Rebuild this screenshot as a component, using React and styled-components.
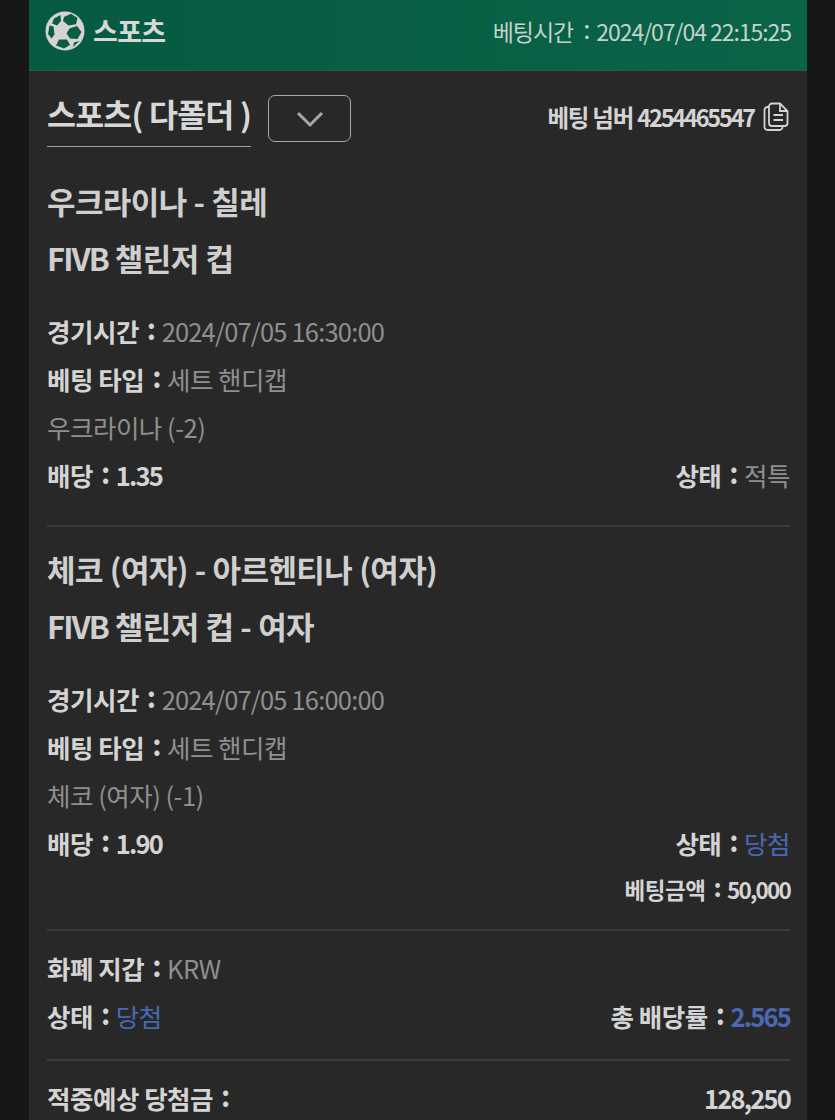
import styled, { createGlobalStyle } from 'styled-components'

const GlobalStyle = createGlobalStyle`
  html, body {
    margin: 0;
    background: #171717;
  }
  body {
    font-family: 'Noto Sans CJK KR', 'Noto Sans', sans-serif;
  }
`

const SoccerBall = () => (
  <svg width="40" height="40" viewBox="0 0 40 40">
    <circle cx="20" cy="20" r="19.500" fill="#d4d4d4" />
    <g fill="#0a5c42">
      <path d="M19 6l7-3.200 6.500 4.200-1.500 6.200-7.500 1.300L18 10z" />
      <path d="M9 7.500L15.500 4l.5 6-4 4.500-5-2z" />
      <path d="M24.500 17.500l7.500-2.500 4.500 6-4 7-7.500-.5-3.500-5z" />
      <path d="M14 28.500h8l3 5.500-6 3.500-8-3z" />
      <path d="M4.500 14.500l4 1 1 8-3 4-3.500-4.500z" />
      <path d="M34.500 30l-5.500 1.500-1 4.500z" />
    </g>
  </svg>
)

const CopyIcon = () => (
  <svg width="26" height="30" viewBox="0 0 26 30" fill="none" stroke="#d4d4d4" strokeWidth="1.800">
    <path d="M6 5H4.500A3 3 0 0 0 1.500 8v17a3 3 0 0 0 3 3h12a3 3 0 0 0 3-3v-1" />
    <path d="M6 4.500A3 3 0 0 1 9 1.500h8l7.500 7.500v12a3 3 0 0 1-3 3H9a3 3 0 0 1-3-3z" />
    <path d="M17 1.500V9h7.500M10.500 13h9.500M10.500 18h9.500" />
  </svg>
)

const Chevron = () => (
  <svg width="28" height="18" viewBox="0 0 28 18" fill="none" stroke="#a8a8a8" strokeWidth="3">
    <path d="M2 3l12 12L26 3" />
  </svg>
)

const Panel = styled.div`
  width: 778px;
  height: 1120px;
  margin-left: 29px;
  background: #282828;
  overflow: hidden;
`

const Header = styled.header`
  height: 71px;
  box-sizing: border-box;
  padding: 0 16px 9px;
  display: flex;
  align-items: center;
  justify-content: space-between;
  background: linear-gradient(90deg, #055a41, #0a6448);
  border-bottom: 1px solid #2d5a4c;
`

const Brand = styled.div`
  display: flex;
  align-items: center;
  gap: 8px;
  font-size: 27px;
  font-weight: 700;
  color: #d8d8d8;
  letter-spacing: -0.7px;
`

const BetTime = styled.div`
  font-size: 23px;
  color: #c4d2cc;
  letter-spacing: -1.050px;
`

const Content = styled.main`
  padding: 0 17px 0 18px;
`

const TopRow = styled.div`
  height: 103px;
  display: flex;
  align-items: flex-start;
  justify-content: space-between;
`

const TopLeft = styled.div`
  display: flex;
  align-items: flex-start;
  gap: 17px;
  padding-top: 24px;
`

const Category = styled.h2`
  margin: 0;
  height: 52px;
  line-height: 36px;
  box-sizing: border-box;
  border-bottom: 1px solid #a0a0a0;
  font-size: 31.500px;
  font-weight: 700;
  color: #d8d8d8;
  letter-spacing: -0.8px;
`

const ToggleButton = styled.button`
  width: 83px;
  height: 47px;
  padding: 0;
  background: transparent;
  border: 1px solid #a8a8a8;
  border-radius: 7px;
  display: flex;
  align-items: center;
  justify-content: center;
`

const BetNumber = styled.div`
  display: flex;
  align-items: center;
  gap: 9px;
  padding: 29px 1px 0 0;
  font-size: 23.500px;
  font-weight: 700;
  color: #d4d4d4;
  letter-spacing: -1.200px;
`

const Title = styled.h3`
  margin: 0;
  height: 57px;
  line-height: 54px;
  font-size: 31px;
  font-weight: 700;
  color: #cfcfcf;
  letter-spacing: -0.6px;
  word-spacing: 0.5px;
`

const Rows = styled.div`
  margin-top: 19px;
`

const Row = styled.div`
  height: 48px;
  box-sizing: border-box;
  padding-bottom: 2px;
  display: flex;
  align-items: center;
  justify-content: space-between;
  font-size: 25.500px;
  letter-spacing: -0.5px;
`

const SmallRow = styled(Row)`
  justify-content: flex-end;
  height: 46px;
  font-size: 22.500px;
`

const Label = styled.span`
  font-weight: 700;
  color: #d4d4d4;
`

const Colon = styled.span`
  display: inline-block;
  margin: 0 6px 0 8px;
  font-size: 1.120em;
  line-height: 1;
  font-weight: 700;
  color: #d4d4d4;
  transform: translateY(-2px);
`

const HeaderColon = styled(Colon)`
  margin: 0 7px 0 10px;
  font-weight: 400;
  color: #c4d2cc;
`

const Value = styled.span`
  font-weight: ${p => (p.$strong ? 700 : 400)};
  letter-spacing: ${p => (p.$tight ? '-1.8px' : 'inherit')};
  color: ${p => (p.$blue ? '#4a69b4' : p.$strong ? '#d4d4d4' : '#8f8f8f')};
`

const DateValue = styled(Value)`
  letter-spacing: -0.82px;
`

const Digits = styled.span`
  letter-spacing: -1.950px;
`

const BetDigits = styled(Digits)`
  letter-spacing: -2.200px;
`

const Divider = styled.hr`
  margin: ${p => p.$top}px 0 ${p => p.$bottom}px;
  border: 0;
  height: 2px;
  background: #3c3c3c;
`

const Game = ({ title, league, time, pick, odds, status, won }) => (
  <section>
    <Title>{title}</Title>
    <Title><Digits>FIVB</Digits> {league}</Title>
    <Rows>
      <Row><span><Label>경기시간</Label><Colon>:</Colon><DateValue>{time}</DateValue></span></Row>
      <Row><span><Label>베팅 타입</Label><Colon>:</Colon><Value>세트 핸디캡</Value></span></Row>
      <Row><Value>{pick}</Value></Row>
      <Row>
        <span><Label>배당</Label><Colon>:</Colon><Value $strong $tight>{odds}</Value></span>
        <span><Label>상태</Label><Colon>:</Colon><Value $blue={won}>{status}</Value></span>
      </Row>
    </Rows>
  </section>
)

export default function App() {
  return (
    <>
      <GlobalStyle />
      <Panel>
        <Header>
          <Brand><SoccerBall />스포츠</Brand>
          <BetTime>베팅시간<HeaderColon>:</HeaderColon>2024/07/04 22:15:25</BetTime>
        </Header>
        <Content>
          <TopRow>
            <TopLeft>
              <Category>스포츠( 다폴더 )</Category>
              <ToggleButton aria-label="펼치기"><Chevron /></ToggleButton>
            </TopLeft>
            <BetNumber><span>베팅 넘버 <BetDigits>4254465547</BetDigits></span><CopyIcon /></BetNumber>
          </TopRow>
          <Game
            title="우크라이나 - 칠레"
            league="챌린저 컵"
            time="2024/07/05 16:30:00"
            pick="우크라이나 (-2)"
            odds="1.35"
            status="적특"
          />
          <Divider $top={26} $bottom={15} />
          <Game
            title="체코 (여자) - 아르헨티나 (여자)"
            league="챌린저 컵 - 여자"
            time="2024/07/05 16:00:00"
            pick="체코 (여자) (-1)"
            odds="1.90"
            status="당첨"
            won
          />
          <SmallRow><span><Label>베팅금액</Label><Colon>:</Colon><Value $strong $tight>50,000</Value></span></SmallRow>
          <Divider $top={16} $bottom={13} />
          <Row><span><Label>화폐 지갑</Label><Colon>:</Colon><Value>KRW</Value></span></Row>
          <Row>
            <span><Label>상태</Label><Colon>:</Colon><Value $blue>당첨</Value></span>
            <span><Label>총 배당률</Label><Colon>:</Colon><Value $blue $strong $tight>2.565</Value></span>
          </Row>
          <Divider $top={19} $bottom={13} />
          <Row>
            <span><Label>적중예상 당첨금</Label><Colon>:</Colon></span>
            <Value $strong $tight>128,250</Value>
          </Row>
        </Content>
      </Panel>
    </>
  )
}
